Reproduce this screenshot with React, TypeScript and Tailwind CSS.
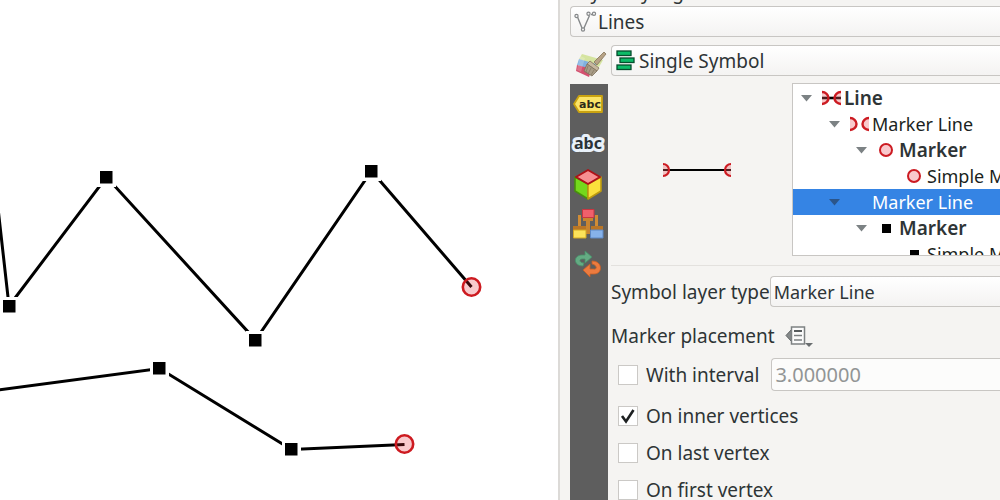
import { useState } from "react";
import type { ReactNode } from "react";
import clsx from "clsx";

const SQUARES = [
  [9, 306],
  [106, 177],
  [255, 340],
  [371, 171],
  [159, 368],
  [291, 449],
];

const ENDS = [
  [472, 287],
  [405, 444],
];

const MapCanvas = () => (
  <svg
    className="h-full w-full"
    viewBox="0 0 558 500"
    preserveAspectRatio="xMinYMin slice"
    role="img"
    aria-label="Map canvas"
  >
    <g fill="none" stroke="#000" strokeWidth="3">
      <path d="M-4 190 9 306 106.500 177 255.500 340 371.500 171 471.500 287" />
      <path d="M-2 390 159.500 368.500 291.500 449.500 404.500 444.500" />
    </g>
    {SQUARES.map(([x, y]) => (
      <g key={x}>
        <rect x={x - 9} y={y - 9} width="19" height="19" fill="#fff" />
        <rect x={x - 6} y={y - 6} width="12.500" height="12.500" fill="#000" />
      </g>
    ))}
    {ENDS.map(([x, y]) => (
      <circle
        key={x}
        cx={x - 0.5}
        cy={y}
        r="8.700"
        fill="#e0202c"
        fillOpacity="0.240"
        stroke="#cd1a20"
        strokeWidth="2.600"
      />
    ))}
  </svg>
);

const LinesIcon = () => (
  <svg width="24" height="22" viewBox="0 0 24 22" fill="none" stroke="#85888a">
    <path d="M3.500 6 8 17M10 17 15.500 4.500M17 3.500h3" strokeWidth="1.400" />
    <g fill="#f5f5f5" strokeWidth="1.200">
      <circle cx="2.500" cy="5" r="1.600" />
      <circle cx="9" cy="18.500" r="1.600" />
      <circle cx="14.500" cy="2.800" r="1.600" />
      <circle cx="20" cy="2.800" r="1.600" />
    </g>
  </svg>
);

const SingleSymbolIcon = () => (
  <svg width="22" height="22" viewBox="0 0 22 22" fill="#0dbb68" stroke="#064d2d" strokeWidth="1.300">
    <rect x="2" y="1" width="14" height="4.500" />
    <rect x="5" y="8" width="14" height="4.500" />
    <rect x="2" y="15" width="14" height="4.500" />
  </svg>
);

const PaintIcon = () => (
  <svg width="32" height="28" viewBox="0 0 32 28">
    <path d="M7 3 28 9 24 16 4 8Z" fill="#d5e4a0" />
    <path d="M4 8 21 13 17 20 2 14Z" fill="#7fb0e0" />
    <path d="M2 14 17 18 14 26 1 20Z" fill="#d3506f" />
    <path d="M5 5 10 7 6 21 2 19Z" fill="#fff" fillOpacity="0.200" />
    <path d="M29 1 31 3 22 14 19 11Z" fill="#b6a286" stroke="#84735a" strokeWidth="0.800" />
    <path d="M15 10 24 17 22 20 12 13Z" fill="#c6b79f" stroke="#84735a" strokeWidth="0.800" />
    <path d="M12 13 22 20 17 25 9 20Z" fill="#a89c87" stroke="#7d705b" strokeWidth="0.800" />
    <path d="m13 15-2 6m5-4-3 6m6-4-3 5" stroke="#83765f" strokeWidth="0.700" />
  </svg>
);

const LabelTagIcon = () => (
  <svg width="30" height="20" viewBox="0 0 30 20">
    <path d="M1 10 6 2H29V18H6Z" fill="#fbe468" stroke="#c9a210" strokeWidth="1.800" strokeLinejoin="round" />
    <text x="17" y="14" textAnchor="middle" fill="#2d2a18" className="font-['DejaVu_Sans'] text-[11px] font-bold">
      abc
    </text>
  </svg>
);

const MaskIcon = () => (
  <svg width="34" height="22" viewBox="0 0 34 22">
    <text
      x="17"
      y="16"
      textAnchor="middle"
      fill="#2b3238"
      stroke="#e9f1fa"
      strokeWidth="6"
      strokeLinejoin="round"
      paintOrder="stroke"
      className="font-['Noto_Sans'] text-base font-bold"
    >
      abc
    </text>
  </svg>
);

const CubeIcon = () => (
  <svg width="30" height="32" viewBox="0 0 30 32" strokeLinejoin="round">
    <path d="M2 9 15 16V31L2 23Z" fill="#74d81c" stroke="#47900d" strokeWidth="1.600" />
    <path d="M28 9 15 16V31L28 23Z" fill="#fbe03c" stroke="#bd9b10" strokeWidth="1.600" />
    <path d="M15 2 27 9 15 16 3 9Z" fill="#f78f91" stroke="#ae1217" strokeWidth="2" />
  </svg>
);

const BrushesIcon = () => (
  <svg width="32" height="32" viewBox="0 0 32 32">
    <path d="M11 9H21V13H18V26H14V13H11Z" fill="#c98530" />
    <path d="M6 7H9V19H6ZM23 7H26V19H23Z" fill="#d08c35" />
    <path d="M1 18H14V22H1ZM19 18H31V22H19Z" fill="#b87526" />
    <path d="M1.500 22H14V30H1.500Z" fill="#fbe25a" stroke="#d3a822" />
    <path d="M18.500 22H31V30H18.500Z" fill="#86b2ea" stroke="#5d88c4" />
    <path d="M10.500 1.500H22V9.500H10.500Z" fill="#f0606c" stroke="#ca3540" />
  </svg>
);

const HistoryIcon = () => (
  <svg width="28" height="28" viewBox="0 0 28 28" strokeLinejoin="round" strokeWidth="0.800">
    <path
      d="M9 16C-1 16-1 5 8 5H11V1L18 7 11 13V9H8C5 9 5 13 10 13Z"
      fill="#64ab83"
      stroke="#47906a"
    />
    <path
      d="M18 11C29 11 29 24 20 24 18 24 17 24 16 24V27L9 20 16 14V19H19C24 20 23 15 18 14Z"
      fill="#ec7b3f"
      stroke="#c85f26"
    />
  </svg>
);

const PlacementIcon = () => (
  <svg width="28" height="22" viewBox="0 0 28 22">
    <path d="M7 4V17L1 10.500Z" fill="#85898a" stroke="#5d6163" />
    <rect x="6.500" y="2" width="13" height="17" fill="#fbfbfb" stroke="#7d8182" strokeWidth="1.500" />
    <path d="M9 6H17" stroke="#585c5e" strokeWidth="2" />
    <path d="M9 10.500H17M9 15H17" stroke="#7d8182" strokeWidth="1.500" />
    <path d="M20 18H28L24 22Z" fill="#6a6e70" />
  </svg>
);

const LineGlyph = ({ line = false }: { line?: boolean }) => (
  <svg width="19" height="16" viewBox="0 0 19 16">
    {line && <path d="M0 8H19" stroke="#000" strokeWidth="2.600" />}
    <g fill="#ee5a62" fillOpacity="0.330" stroke="#cc1b22" strokeWidth="2.400">
      <path d="M0 2A6.500 6 0 0 1 0 14M19 2A6.500 6 0 0 0 19 14" />
    </g>
  </svg>
);

const CircleGlyph = () => (
  <svg width="16" height="16" viewBox="0 0 16 16">
    <circle cx="8" cy="8" r="6" fill="#f9c8cc" stroke="#cc1b22" strokeWidth="2" />
  </svg>
);

const SquareGlyph = () => (
  <svg width="16" height="16" viewBox="0 0 16 16">
    <rect x="4" y="4" width="9" height="9" />
  </svg>
);

const PreviewLine = () => (
  <svg width="70" height="16" viewBox="0 0 70 16" role="img" aria-label="Symbol preview">
    <path d="M1 8H69" stroke="#000" strokeWidth="2.200" />
    <g fill="#ee5a62" fillOpacity="0.330" stroke="#cc1b22" strokeWidth="2.200">
      <path d="M1 2A6 6 0 0 1 1 14M69 2A6 6 0 0 0 69 14" />
    </g>
  </svg>
);

type ComboProps = { label: string; value: string; icon?: ReactNode; small?: boolean };

const Combo = ({ label, value, icon, small }: ComboProps) => (
  <div className="relative min-w-0 flex-1">
    {icon && <span className="pointer-events-none absolute inset-y-0 left-1 flex items-center">{icon}</span>}
    <select
      aria-label={label}
      className={clsx(
        "block h-[31px] w-full appearance-none rounded-l border border-r-0 border-[#c8c6c3] bg-linear-to-b from-white to-[#f4f3f2]",
        icon ? "pl-[27px]" : "pl-[3px]",
        small && "text-lg"
      )}
    >
      <option>{value}</option>
    </select>
  </div>
);

const TOOLS = [
  { name: "Labels", icon: <LabelTagIcon /> },
  { name: "Masks", icon: <MaskIcon /> },
  { name: "3D View", icon: <CubeIcon /> },
  { name: "Diagrams", icon: <BrushesIcon /> },
  { name: "History", icon: <HistoryIcon /> },
];

type TreeRow = {
  text: string;
  indent: string;
  icon?: ReactNode;
  bold?: boolean;
  leaf?: boolean;
  selected?: boolean;
};

const TREE: TreeRow[] = [
  { text: "Line", indent: "pl-2", icon: <LineGlyph line />, bold: true },
  { text: "Marker Line", indent: "pl-9", icon: <LineGlyph /> },
  { text: "Marker", indent: "pl-[63px]", icon: <CircleGlyph />, bold: true },
  { text: "Simple Marker", indent: "pl-[91px]", icon: <CircleGlyph />, leaf: true },
  { text: "Marker Line", indent: "pl-9", selected: true },
  { text: "Marker", indent: "pl-[63px]", icon: <SquareGlyph />, bold: true },
  { text: "Simple Marker", indent: "pl-[91px]", icon: <SquareGlyph />, leaf: true },
];

const SymbolTree = () => (
  <ul
    role="tree"
    aria-label="Symbol layers"
    className="h-[173px] min-w-0 flex-1 overflow-hidden border border-r-0 border-[#c8c6c3] bg-white pt-px"
  >
    {TREE.map((row, i) => (
      <li
        key={i}
        role="treeitem"
        aria-selected={!!row.selected}
        className={clsx(
          "flex h-[26px] items-center whitespace-nowrap",
          row.indent,
          row.selected ? "bg-[#3584e4] text-white" : "text-[#1b1f21]",
          row.bold ? "font-semibold text-[#2e3436]" : "text-lg"
        )}
      >
        <span className="flex w-5 shrink-0">
          {!row.leaf && (
            <svg width="11" height="7" viewBox="0 0 11 7">
              <path d="M0 0H11L5.500 6.500Z" fill={row.selected ? "#2b558a" : "#7c8284"} />
            </svg>
          )}
        </span>
        <span className="mr-[3px] flex w-5 shrink-0 justify-center">{row.icon}</span>
        {row.text}
      </li>
    ))}
  </ul>
);

type CheckProps = { label: string; checked: boolean; onChange: () => void };

const Check = ({ label, checked, onChange }: CheckProps) => (
  <label className="flex items-center gap-2">
    <span className="relative flex size-5">
      <input
        type="checkbox"
        checked={checked}
        onChange={onChange}
        className="size-5 appearance-none border border-[#cbc9c6] bg-white"
      />
      {checked && (
        <svg className="pointer-events-none absolute inset-0" width="20" height="20" viewBox="0 0 20 20">
          <path d="M4 10 8 15.500 15.500 4" fill="none" stroke="#1d2021" strokeWidth="2.600" />
        </svg>
      )}
    </span>
    {label}
  </label>
);

const App = () => {
  const [placement, setPlacement] = useState({ interval: false, inner: true, last: false, first: false });
  const toggle = (key: keyof typeof placement) => setPlacement({ ...placement, [key]: !placement[key] });

  return (
    <div className="flex h-screen overflow-hidden bg-white font-['Noto_Sans',sans-serif] text-[19px] leading-6 text-[#2e3436]">
      <main className="min-w-0 basis-[55.8%]">
        <MapCanvas />
      </main>

      <aside className="flex min-w-0 flex-1 flex-col border-l-2 border-[#dcdad7] bg-[#f5f4f2] pl-2.5">
        <div className="flex h-1.5 shrink-0 items-end overflow-hidden">
          <h1 className="pb-0.5 leading-6">Layer Styling</h1>
        </div>
        <div className="flex">
          <Combo label="Layer" value="Lines" icon={<LinesIcon />} />
        </div>

        <div className="flex min-h-0 flex-1">
          <nav className="flex w-[38px] shrink-0 flex-col" aria-label="Style pages">
            <button className="flex h-[47px] shrink-0 items-center justify-center pt-2 pl-1" aria-label="Symbology">
              <PaintIcon />
            </button>
            <div className="flex flex-1 flex-col bg-[#5e5e5e]">
              {TOOLS.map((tool) => (
                <button key={tool.name} aria-label={tool.name} className="flex h-10 items-center justify-center pr-0.5">
                  {tool.icon}
                </button>
              ))}
            </div>
          </nav>

          <div className="flex min-w-0 flex-1 flex-col pt-2 pl-[3px]">
            <div className="flex">
              <Combo label="Renderer" value="Single Symbol" icon={<SingleSymbolIcon />} />
            </div>
            <div className="mt-[7px] flex">
              <div className="flex w-[181px] shrink-0 items-center justify-center pr-2.5">
                <PreviewLine />
              </div>
              <SymbolTree />
            </div>

            <div className="mt-[9px] flex border-t border-[#e3e1de] pt-2.5">
              <span className="flex items-center whitespace-nowrap">Symbol layer type</span>
              <Combo label="Symbol layer type" value="Marker Line" small />
            </div>

            <div className="mt-[17px] flex items-center gap-2.5">
              <span>Marker placement</span>
              <button aria-label="Data defined override">
                <PlacementIcon />
              </button>
            </div>

            <div className="mt-2.5 grid gap-y-[13px] pl-[7px]">
              <div className="flex items-center gap-3">
                <Check label="With interval" checked={placement.interval} onChange={() => toggle("interval")} />
                <input
                  aria-label="Interval"
                  defaultValue="3.000000"
                  disabled
                  className="h-[33px] min-w-0 flex-1 rounded-l border border-r-0 border-[#c8c6c3] bg-[#fcfcfb] pl-[3px] text-xl text-[#929595]"
                />
              </div>
              <Check label="On inner vertices" checked={placement.inner} onChange={() => toggle("inner")} />
              <Check label="On last vertex" checked={placement.last} onChange={() => toggle("last")} />
              <Check label="On first vertex" checked={placement.first} onChange={() => toggle("first")} />
            </div>
          </div>
        </div>
      </aside>
    </div>
  );
};

export default App;
